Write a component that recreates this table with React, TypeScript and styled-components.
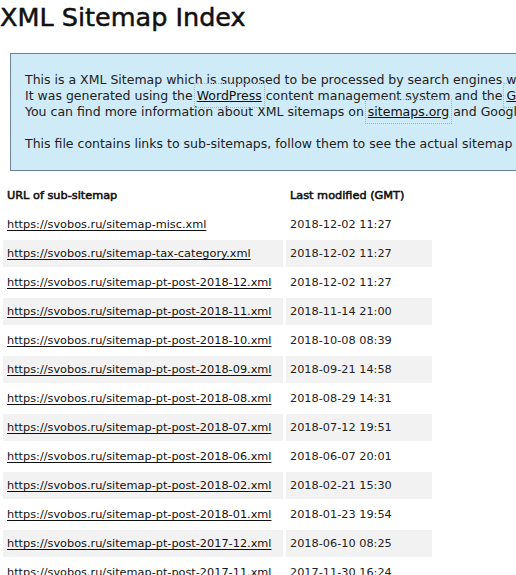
import React from "react";
import styled, { createGlobalStyle } from "styled-components";

const GlobalStyle = createGlobalStyle`
  html, body { overflow: hidden; }
  body {
    margin: 0;
    background: #ffffff;
    color: #1a1a1a;
    font-family: "DejaVu Sans", Verdana, sans-serif;
  }
`;

const Page = styled.div`
  width: 516px;
  height: 575px;
  overflow: hidden;
`;

const Title = styled.h1`
  margin: 2px 0 21px 0;
  font-size: 25.5px;
  line-height: 30px;
  font-weight: normal;
  -webkit-text-stroke: 0.5px #111;
  color: #111;
  white-space: nowrap;
`;

const Intro = styled.div`
  margin-left: 10px;
  width: 620px;
  background: #cfebf7;
  border: 1px solid #6a8294;
  padding: 2px 14px;
  font-size: 12.5px;
  color: #222;
`;

const Para = styled.p`
  margin: 16px 0;
  line-height: 16px;
  white-space: nowrap;
`;

const Line = styled.span`
  display: block;
`;

const BoxedLink = styled.a`
  color: #111;
  text-decoration: underline;
  padding: 5px 3px;
  margin: 0 -3px;
  outline: 1px dotted #c39ec6;
  outline-offset: -1px;
`;

const Table = styled.table`
  margin-top: 9px;
  border-spacing: 3px 2px;
  border-collapse: separate;
  font-size: 11.3px;
  color: #222;
`;

const HeadCell = styled.th<{ $w: number }>`
  width: ${(p) => p.$w}px;
  height: 27px;
  padding: 0 0 0 4px;
  text-align: left;
  vertical-align: middle;
  font-weight: normal;
  -webkit-text-stroke: 0.55px #111;
  color: #111;
  box-sizing: border-box;
`;

const Cell = styled.td<{ $high: boolean }>`
  height: 27px;
  padding: 0 0 0 4px;
  vertical-align: middle;
  white-space: nowrap;
  background: ${(p) => (p.$high ? "#f2f2f2" : "transparent")};
`;

const RowLink = styled.a`
  color: #111;
  text-decoration: underline;
  text-underline-offset: 2px;
`;

const rows: [string, string][] = [
  ["sitemap-misc.xml", "2018-12-02 11:27"],
  ["sitemap-tax-category.xml", "2018-12-02 11:27"],
  ["sitemap-pt-post-2018-12.xml", "2018-12-02 11:27"],
  ["sitemap-pt-post-2018-11.xml", "2018-11-14 21:00"],
  ["sitemap-pt-post-2018-10.xml", "2018-10-08 08:39"],
  ["sitemap-pt-post-2018-09.xml", "2018-09-21 14:58"],
  ["sitemap-pt-post-2018-08.xml", "2018-08-29 14:31"],
  ["sitemap-pt-post-2018-07.xml", "2018-07-12 19:51"],
  ["sitemap-pt-post-2018-06.xml", "2018-06-07 20:01"],
  ["sitemap-pt-post-2018-02.xml", "2018-02-21 15:30"],
  ["sitemap-pt-post-2018-01.xml", "2018-01-23 19:54"],
  ["sitemap-pt-post-2017-12.xml", "2018-06-10 08:25"],
  ["sitemap-pt-post-2017-11.xml", "2017-11-30 16:24"],
  ["sitemap-pt-post-2017-10.xml", "2017-10-31 12:10"],
];

export default function App() {
  return (
    <Page>
      <GlobalStyle />
      <Title>XML Sitemap Index</Title>
      <Intro>
        <Para>
          <Line>
            This is a XML Sitemap which is supposed to be processed by search engines which follow the XML Sitemap
            standard like Ask.com, Bing, Google and Yahoo.
          </Line>
          <Line>
            It was generated using the <BoxedLink href="#">WordPress</BoxedLink> content management system and the{" "}
            <BoxedLink href="#">Google Sitemap Generator Plugin</BoxedLink> by Arne Brachhold.
          </Line>
          <Line>
            You can find more information about XML sitemaps on <BoxedLink href="#">sitemaps.org</BoxedLink> and
            Google's list of sitemap programs.
          </Line>
        </Para>
        <Para>This file contains links to sub-sitemaps, follow them to see the actual sitemap content.</Para>
      </Intro>
      <Table>
        <thead>
          <tr>
            <HeadCell $w={280}>URL of sub-sitemap</HeadCell>
            <HeadCell $w={146}>Last modified (GMT)</HeadCell>
          </tr>
        </thead>
        <tbody>
          {rows.map(([path, date], i) => (
            <tr key={path}>
              <Cell $high={i % 2 === 1}>
                <RowLink href="#">{`https://svobos.ru/${path}`}</RowLink>
              </Cell>
              <Cell $high={i % 2 === 1}>{date}</Cell>
            </tr>
          ))}
        </tbody>
      </Table>
    </Page>
  );
}
